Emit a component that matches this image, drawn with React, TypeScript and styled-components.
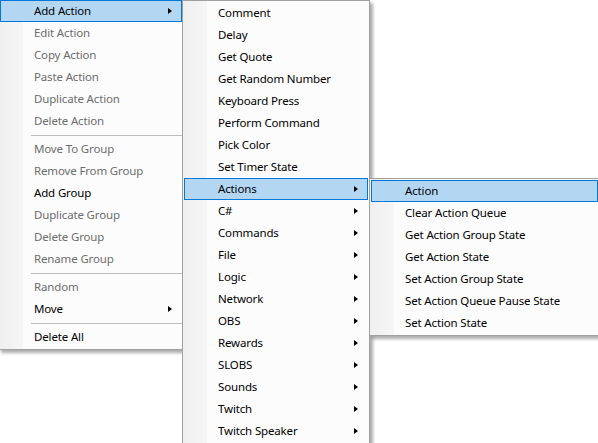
import React from 'react';
import styled, { createGlobalStyle } from 'styled-components';

const GlobalStyle = createGlobalStyle`
    html, body {
        margin: 0;
        padding: 0;
        background: #ffffff;
        overflow: hidden;
    }
`;

const Desktop = styled.div`
    position: relative;
    width: 598px;
    height: 443px;
    overflow: hidden;
    background: #ffffff;
    font-family: "Noto Sans", "Open Sans", sans-serif;
    font-size: 11.5px;
    letter-spacing: -0.15px;
`;

const Menu = styled.div<{ $left: number; $top: number; $width: number }>`
    position: absolute;
    left: ${p => p.$left}px;
    top: ${p => p.$top}px;
    width: ${p => p.$width}px;
    box-sizing: border-box;
    display: flex;
    flex-direction: column;
    padding: 1px;
    border: 1px solid #a0a0a0;
    background:
        linear-gradient(to right, #efefef 0, #f6f6f6 24px, #fcfcfc 24px, #fcfcfc 100%);
    background-origin: padding-box;
    box-shadow: 3px 3px 3px rgba(0, 0, 0, 0.32);
`;

const Item = styled.div<{ $active?: boolean; $disabled?: boolean }>`
    display: flex;
    align-items: center;
    height: 22px;
    box-sizing: border-box;
    padding: 0 9px 0 33px;
    border: 1px solid ${p => (p.$active ? '#0078d7' : 'transparent')};
    background: ${p => (p.$active ? '#b3d7f3' : 'transparent')};
    color: ${p => (p.$disabled ? '#6d6d6d' : '#000000')};
    white-space: nowrap;
`;

const Label = styled.span`
    flex: 1;
    line-height: 20px;
`;

const Arrow = styled.span`
    width: 0;
    height: 0;
    border-top: 3.5px solid transparent;
    border-bottom: 3.5px solid transparent;
    border-left: 4px solid #000000;
`;

const Separator = styled.div`
    height: 1px;
    margin: 3px 0 2px 31px;
    background: #bdbdbd;
`;

type Entry =
    | { sep: true }
    | { label: string; sub?: boolean; disabled?: boolean; active?: boolean };

const mainMenu: Entry[] = [
    { label: 'Add Action', sub: true, active: true },
    { label: 'Edit Action', disabled: true },
    { label: 'Copy Action', disabled: true },
    { label: 'Paste Action', disabled: true },
    { label: 'Duplicate Action', disabled: true },
    { label: 'Delete Action', disabled: true },
    { sep: true },
    { label: 'Move To Group', disabled: true },
    { label: 'Remove From Group', disabled: true },
    { label: 'Add Group' },
    { label: 'Duplicate Group', disabled: true },
    { label: 'Delete Group', disabled: true },
    { label: 'Rename Group', disabled: true },
    { sep: true },
    { label: 'Random', disabled: true },
    { label: 'Move', sub: true },
    { sep: true },
    { label: 'Delete All' },
];

const addMenu: Entry[] = [
    { label: 'Comment' },
    { label: 'Delay' },
    { label: 'Get Quote' },
    { label: 'Get Random Number' },
    { label: 'Keyboard Press' },
    { label: 'Perform Command' },
    { label: 'Pick Color' },
    { label: 'Set Timer State' },
    { label: 'Actions', sub: true, active: true },
    { label: 'C#', sub: true },
    { label: 'Commands', sub: true },
    { label: 'File', sub: true },
    { label: 'Logic', sub: true },
    { label: 'Network', sub: true },
    { label: 'OBS', sub: true },
    { label: 'Rewards', sub: true },
    { label: 'SLOBS', sub: true },
    { label: 'Sounds', sub: true },
    { label: 'Twitch', sub: true },
    { label: 'Twitch Speaker', sub: true },
];

const actionsMenu: Entry[] = [
    { label: 'Action', active: true },
    { label: 'Clear Action Queue' },
    { label: 'Get Action Group State' },
    { label: 'Get Action State' },
    { label: 'Set Action Group State' },
    { label: 'Set Action Queue Pause State' },
    { label: 'Set Action State' },
];

interface PopupProps {
    entries: Entry[];
    left: number;
    top: number;
    width: number;
}

const Popup: React.FC<PopupProps> = ({ entries, left, top, width }) => {
    return (
        <Menu $left={left} $top={top} $width={width}>
            {
                entries.map((entry: Entry, index: number) => {
                    if ('sep' in entry) {
                        return <Separator key={index} />;
                    }
                    return (
                        <Item key={index} $active={entry.active} $disabled={entry.disabled}>
                            <Label>{entry.label}</Label>
                            {entry.sub && <Arrow />}
                        </Item>
                    );
                })
            }
        </Menu>
    );
};

const App: React.FC = () => {
    return (
        <>
            <GlobalStyle />
            <Desktop>
                <Popup entries={mainMenu} left={-2} top={-2} width={186} />
                <Popup entries={addMenu} left={182} top={0} width={188} />
                <Popup entries={actionsMenu} left={369} top={178} width={231} />
            </Desktop>
        </>
    );
};

export default App;
